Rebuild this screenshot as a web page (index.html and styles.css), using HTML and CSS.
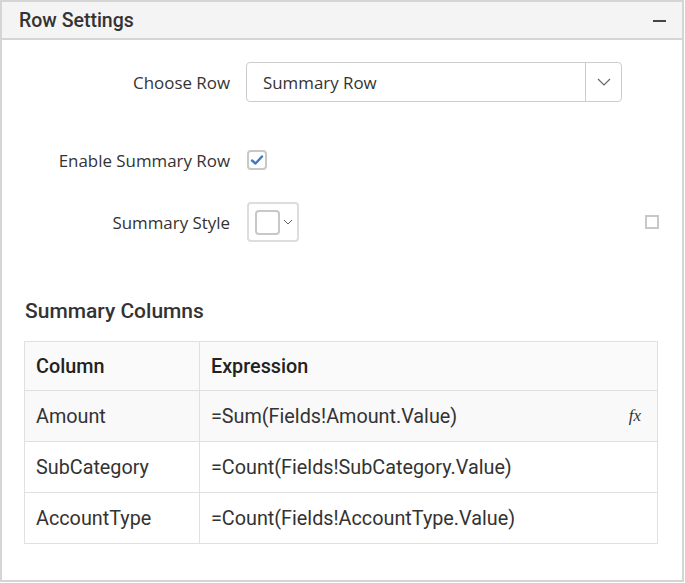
FILE: index.html
```html
<!DOCTYPE html>
<html>
<head>
<meta charset="utf-8">
<link rel="stylesheet" href="styles.css">
</head>
<body>
<div class="panel">
  <div class="panel-header">
    <span class="panel-title">Row Settings</span>
    <span class="collapse"></span>
  </div>
  <div class="panel-body">
    <div class="form-row row-choose">
      <label class="lbl">Choose Row</label>
      <div class="dropdown">
        <span class="dd-text">Summary Row</span>
        <span class="dd-btn">
          <svg width="14" height="8" viewBox="0 0 14 8"><path d="M1 1 L7 7 L13 1" fill="none" stroke="#666" stroke-width="1.2"/></svg>
        </span>
      </div>
    </div>
    <div class="form-row row-enable">
      <label class="lbl">Enable Summary Row</label>
      <span class="checkbox">
        <svg width="14" height="12" viewBox="0 0 14 12"><path d="M2 6.5 L5.5 9.5 L12 2.5" fill="none" stroke="#3b7bbf" stroke-width="2.4" stroke-linecap="round" stroke-linejoin="round"/></svg>
      </span>
    </div>
    <div class="form-row row-style">
      <label class="lbl">Summary Style</label>
      <div class="style-picker">
        <span class="swatch"></span>
        <svg width="10" height="6" viewBox="0 0 10 6"><path d="M1 1 L5 5 L9 1" fill="none" stroke="#666" stroke-width="1"/></svg>
      </div>
      <span class="spacer"></span>
      <span class="small-box"></span>
    </div>
    <h3 class="section-title">Summary Columns</h3>
    <table class="grid">
      <thead>
        <tr><th class="c1">Column</th><th>Expression</th></tr>
      </thead>
      <tbody>
        <tr class="hover"><td class="c1">Amount</td><td><div class="expr"><span>=Sum(Fields!Amount.Value)</span><span class="fx">fx</span></div></td></tr>
        <tr><td class="c1">SubCategory</td><td>=Count(Fields!SubCategory.Value)</td></tr>
        <tr><td class="c1">AccountType</td><td>=Count(Fields!AccountType.Value)</td></tr>
      </tbody>
    </table>
  </div>
</div>
</body>
</html>
```
FILE: styles.css
```css
html, body { margin: 0; padding: 0; background: #fff; }
body { font-family: "Open Sans", "Noto Sans", sans-serif; color: #333; }

.panel {
  width: 684px;
  height: 582px;
  box-sizing: border-box;
  border: 2px solid #d5d5d5;
}
.panel-header {
  height: 36px;
  background: #f4f4f4;
  border-bottom: 2px solid #d5d5d5;
  display: flex;
  align-items: center;
  justify-content: space-between;
  padding: 0 16px 0 17px;
}
.panel-title {
  font-family: Roboto, sans-serif;
  font-weight: 500;
  font-size: 19.5px;
  color: #333;
}
.collapse {
  width: 13px;
  height: 2px;
  background: #444;
  margin-top: 2px;
}
.panel-body { padding: 0; }

.form-row {
  display: flex;
  align-items: center;
}
.lbl {
  width: 244px;
  text-align: right;
  font-size: 16.9px;
  color: #333;
  padding-right: 16px;
  box-sizing: border-box;
  flex: none;
}
.row-choose { margin-top: 22px; height: 40px; }
.row-enable { margin-top: 48px; height: 20px; }
.row-style { margin-top: 32px; height: 40px; padding-right: 23px; }

.dropdown {
  width: 376px;
  height: 40px;
  box-sizing: border-box;
  border: 1px solid #ccc;
  border-radius: 4px;
  display: flex;
  align-items: center;
}
.dd-text {
  flex: 1;
  padding-left: 16px;
  font-size: 16.9px;
  color: #333;
}
.dd-btn {
  width: 35px;
  height: 38px;
  border-left: 1px solid #ccc;
  display: flex;
  align-items: center;
  justify-content: center;
}
.checkbox {
  width: 20px;
  height: 20px;
  box-sizing: border-box;
  border: 2px solid #c8c8c8;
  border-radius: 4px;
  display: flex;
  align-items: center;
  justify-content: center;
  margin-left: 1px;
}
.style-picker {
  width: 52px;
  height: 40px;
  box-sizing: border-box;
  border: 2px solid #ddd;
  border-radius: 4px;
  display: flex;
  align-items: center;
  padding-left: 6px;
  gap: 3px;
  margin-left: 1px;
}
.swatch {
  width: 25px;
  height: 25px;
  box-sizing: border-box;
  border: 2px solid #c8c8c8;
  border-radius: 4px;
  background: #fff;
}
.spacer { flex: 1; }
.small-box {
  width: 14px;
  height: 14px;
  box-sizing: border-box;
  border: 2px solid #c8c8c8;
}

.section-title {
  margin: 57px 0 0 23px;
  font-family: Roboto, sans-serif;
  font-weight: 500;
  font-size: 21px;
  color: #333;
  line-height: 24px;
  height: 24px;
}
.grid {
  margin: 18px 0 0 22px;
  width: 634px;
  border-collapse: collapse;
  font-family: Roboto, sans-serif;
  font-size: 19.8px;
  color: #333;
}
.grid th, .grid td {
  border: 1px solid #e0e0e0;
  height: 51px;
  padding: 0 11px;
  text-align: left;
  box-sizing: border-box;
}
.grid th {
  background: #fafafa;
  font-weight: 500;
  color: #222;
  height: 49px;
}
.grid .c1 { width: 175px; }
.grid tr.hover td { background: #f9f9f9; }
.expr {
  display: flex;
  justify-content: space-between;
  align-items: center;
}
.fx {
  font-family: "Liberation Serif", serif;
  font-style: italic;
  font-size: 17px;
  color: #333;
  margin-right: 5px;
}
```
